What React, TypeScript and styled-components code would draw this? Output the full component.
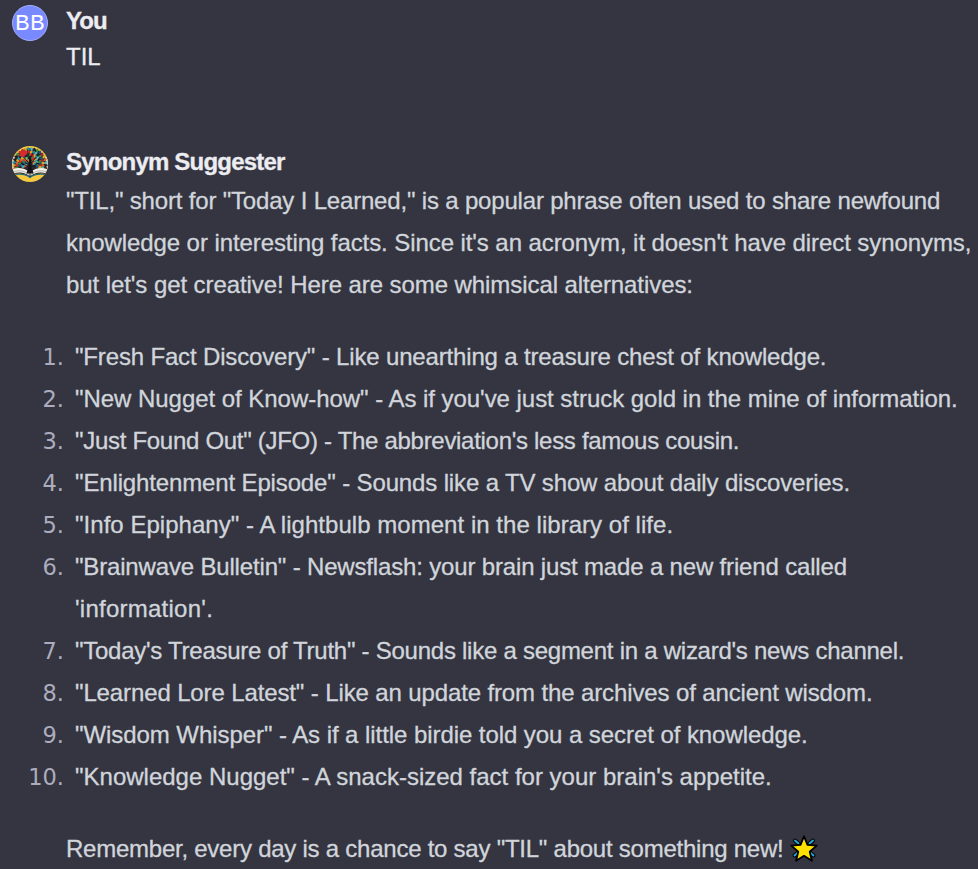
import React from "react";
import styled, { createGlobalStyle } from "styled-components";

const GlobalStyle = createGlobalStyle`
  body {
    margin: 0;
    background: #343541;
    overflow: hidden;
  }
`;

const Conversation = styled.main`
  display: flex;
  flex-direction: column;
  gap: 69px;
  box-sizing: border-box;
  height: 869px;
  padding: 3px 0 0 12px;
  overflow: hidden;
  background: #343541;
  color: #d1d5db;
  font-family: "Liberation Sans", Arial, sans-serif;
  font-size: 24px;
  -webkit-text-stroke: 0.3px currentColor;
`;

const Message = styled.article`
  display: grid;
  grid-template-columns: 36px 1fr;
  column-gap: 18px;
`;

const Avatar = styled.div`
  display: flex;
  align-items: center;
  justify-content: center;
  box-sizing: border-box;
  width: 36px;
  height: 36px;
  margin-top: 2px;
  border-radius: 50%;
  overflow: hidden;
`;

const InitialsAvatar = styled(Avatar)`
  border: 1px solid #a3adff;
  background: #7989ff;
  color: #fff;
  font-size: 21.5px;
  letter-spacing: 0.6px;
  text-indent: 0.6px;
  line-height: 34px;
  -webkit-text-stroke: 0.1px #fff;
`;

const Body = styled.div`
  min-width: 0;
`;

const Author = styled.h2<{ $tracking: number }>`
  margin: 0;
  color: #ececf1;
  font-size: 24px;
  font-weight: 700;
  line-height: 36px;
  height: 36px;
  letter-spacing: ${(p) => p.$tracking}px;
`;

const Prompt = styled.p`
  margin: 0;
  color: #ececf1;
  line-height: 36px;
`;

const Prose = styled.div`
  display: flex;
  flex-direction: column;
  gap: 30px;
`;

const Paragraph = styled.p`
  margin: 0;
`;

const Line = styled.span<{ $tracking?: number }>`
  display: block;
  height: 42px;
  line-height: 42px;
  white-space: nowrap;
  letter-spacing: ${(p) => p.$tracking ?? 0}px;
`;

const List = styled.ol`
  margin: 0 0 0 -42px;
  padding: 0;
  list-style: none;
`;

const Item = styled.li`
  display: grid;
  grid-template-columns: 40px 1fr;
  column-gap: 11px;
`;

const Marker = styled.span`
  color: #acacbe;
  font-family: "DejaVu Sans", sans-serif;
  font-size: 22.5px;
  line-height: 42px;
  height: 42px;
  text-align: right;
  white-space: nowrap;
  -webkit-text-stroke: 0;
`;

const StarIcon = styled.svg`
  display: inline-block;
  width: 28px;
  height: 28px;
  margin-left: 7px;
  vertical-align: -6px;
`;

type TextLine = [text: string, tracking: number];

const intro: TextLine[] = [
  ['"TIL," short for "Today I Learned," is a popular phrase often used to share newfound', -0.18],
  ["knowledge or interesting facts. Since it's an acronym, it doesn't have direct synonyms,", -0.08],
  ["but let's get creative! Here are some whimsical alternatives:", -0.075],
];

const suggestions: TextLine[][] = [
  [['"Fresh Fact Discovery" - Like unearthing a treasure chest of knowledge.', -0.16]],
  [['"New Nugget of Know-how" - As if you\'ve just struck gold in the mine of information.', -0.04]],
  [['"Just Found Out" (JFO) - The abbreviation\'s less famous cousin.', -0.295]],
  [['"Enlightenment Episode" - Sounds like a TV show about daily discoveries.', -0.14]],
  [['"Info Epiphany" - A lightbulb moment in the library of life.', 0.035]],
  [
    ['"Brainwave Bulletin" - Newsflash: your brain just made a new friend called', -0.165],
    ["'information'.", 0.25],
  ],
  [['"Today\'s Treasure of Truth" - Sounds like a segment in a wizard\'s news channel.', -0.255]],
  [['"Learned Lore Latest" - Like an update from the archives of ancient wisdom.', -0.125]],
  [['"Wisdom Whisper" - As if a little birdie told you a secret of knowledge.', -0.065]],
  [['"Knowledge Nugget" - A snack-sized fact for your brain\'s appetite.', 0]],
];

const leafColors = ["#d42b2b", "#1f93a4", "#35903f", "#dcae22", "#1c2433", "#b3262e", "#5abcc2", "#1f5080", "#d9622a", "#241c20"];

const leaves = Array.from({ length: 100 }, (_, i) => {
  const ring = Math.floor(i / 20);
  const angle = Math.PI * (0.93 + ((i % 20) / 19) * 1.14);
  const radius = 4.5 + ring * 2.9;
  return {
    x: 18 + Math.cos(angle) * radius,
    y: 19 + Math.sin(angle) * radius,
    turn: (angle * 180) / Math.PI + (ring % 2 ? 25 : -20),
    color: leafColors[(i * 7 + ring * 4 + (i % 3)) % leafColors.length],
  };
});

function TreeOfWords() {
  return (
    <svg width="36" height="36" viewBox="0 0 36 36" aria-hidden="true">
      <rect width="36" height="36" fill="#f6c840" />
      <path d="M0 11h36v14H0z" fill="#d9d6c8" />
      <path d="M2 23C0 10 7 3 18 2c11 1 18 8 16 21L18 25z" fill="#2b2730" />
      {leaves.map((leaf, i) => (
        <ellipse
          key={i}
          cx={leaf.x}
          cy={leaf.y}
          rx="1.8"
          ry="1.15"
          fill={leaf.color}
          transform={`rotate(${leaf.turn} ${leaf.x} ${leaf.y})`}
        />
      ))}
      <path d="M8 6l5-2.500 2.500 4-4 3.500-4.500-1z" fill="#d8292c" />
      <path d="M0 23.500c7-2 13 0 18 4 5-4 11-6 18-4v5c-7-2-13-1-18 3-5-4-11-5-18-3z" fill="#1e1b20" />
      <path d="M1 23c6-2 12-1 16.500 3.500v3.500C13 26.500 8 25.500 1 27.500zM35 23c-6-2-12-1-16.500 3.500v3.500C23 26.500 28 25.500 35 27.500z" fill="#f4f2e8" />
      <path d="M2 25.500c6-1.500 11-.5 15 3M34 25.500c-6-1.500-11-.5-15 3" fill="none" stroke="#8b8880" strokeWidth=".6" />
      <path d="M3 28.500c6-1 11 0 15 3 4-3 9-4 15-3" fill="none" stroke="#286f81" strokeWidth="1.200" />
      <path d="M17.200 12h1.600l.8 9 2 6.500h-7.200l2-6.500z" fill="#151318" />
      <path
        d="M17.500 18l-6-7M18.500 18l6-7M17 21l-8-4M19 21l8-4M18 13l-2-6M18 13l3-6"
        fill="none"
        stroke="#151318"
        strokeWidth=".8"
      />
    </svg>
  );
}

function GlowingStar() {
  return (
    <StarIcon viewBox="0 0 28 28" role="img" aria-label="glowing star">
      <g strokeLinecap="round">
        <path d="M5 5.500l3.500 3M23 5.500l-3.500 3M4.500 20.500l3-2.500M23.500 20.500l-3-2.500" stroke="#000" strokeWidth="4" />
        <path d="M5 5.500l3.500 3M23 5.500l-3.500 3M4.500 20.500l3-2.500M23.500 20.500l-3-2.500" stroke="#23aeda" strokeWidth="1.900" />
      </g>
      <path
        d="M14 1.400l3.500 8.500 9.200.7-7 6 2.200 9.200-7.900-5-7.900 5 2.200-9.200-7-6 9.200-.7z"
        fill="#ffe100"
        stroke="#000"
        strokeWidth="1.800"
        strokeLinejoin="round"
      />
    </StarIcon>
  );
}

export default function App() {
  return (
    <>
      <GlobalStyle />
      <Conversation>
        <Message>
          <InitialsAvatar>BB</InitialsAvatar>
          <Body>
            <Author $tracking={-1}>You</Author>
            <Prompt>TIL</Prompt>
          </Body>
        </Message>
        <Message>
          <Avatar>
            <TreeOfWords />
          </Avatar>
          <Body>
            <Author $tracking={-0.79}>Synonym Suggester</Author>
            <Prose>
              <Paragraph>
                {intro.map(([text, tracking]) => (
                  <Line key={text} $tracking={tracking}>{text}</Line>
                ))}
              </Paragraph>
              <List>
                {suggestions.map((lines, i) => (
                  <Item key={i}>
                    <Marker>{i + 1}.</Marker>
                    <div>
                      {lines.map(([text, tracking]) => (
                        <Line key={text} $tracking={tracking}>{text}</Line>
                      ))}
                    </div>
                  </Item>
                ))}
              </List>
              <Paragraph>
                <Line $tracking={-0.245}>
                  Remember, every day is a chance to say "TIL" about something new!
                  <GlowingStar />
                </Line>
              </Paragraph>
            </Prose>
          </Body>
        </Message>
      </Conversation>
    </>
  );
}
